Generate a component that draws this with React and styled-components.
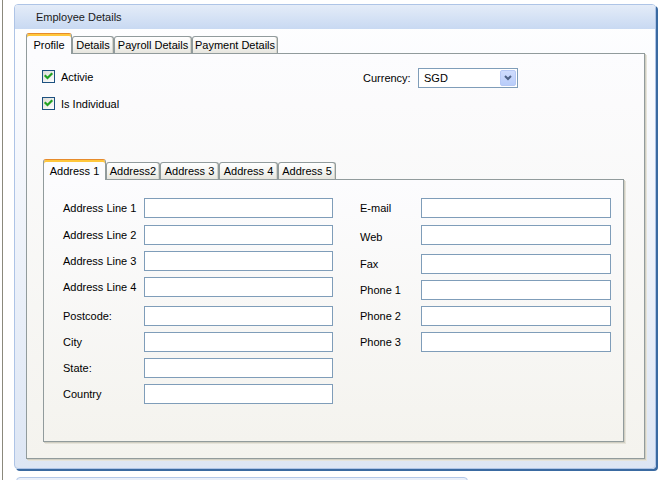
import React from "react";
import styled, { createGlobalStyle } from "styled-components";

const GlobalStyle = createGlobalStyle`
  html, body {
    margin: 0;
    padding: 0;
    background: #ffffff;
  }
  body {
    font-family: "Liberation Sans", Arial, sans-serif;
    font-size: 11px;
    color: #000;
  }
`;

const Page = styled.div`
  display: flex;
  height: 480px;
  overflow: hidden;
`;

const LeftRule = styled.div`
  width: 1px;
  margin-left: 2px;
  background: #8b897c;
`;

const Main = styled.div`
  display: flex;
  flex-direction: column;
  padding: 4px 0 0 11px;
`;

const Frame = styled.section`
  box-sizing: border-box;
  flex-shrink: 0;
  width: 642px;
  height: 465px;
  display: flex;
  flex-direction: column;
  border: 1px solid #aec4e6;
  border-radius: 4px;
  box-shadow: 2px 2px 0 #3a6aa1;
  background: linear-gradient(#ffffff 0%, #f7f9fd 25%, #dde6f4 100%);
`;

const TitleBar = styled.div`
  height: 24px;
  display: flex;
  align-items: center;
  padding-left: 21px;
  border-radius: 3px 3px 0 0;
  background: linear-gradient(#e4ecf8, #c8d9f2);
  color: #1a1a1a;
`;

const FrameBody = styled.div`
  flex: 1;
  display: flex;
  flex-direction: column;
  padding: 4px 10px 9px 11px;
`;

const TabBlock = styled.div`
  flex: 1;
  display: flex;
  flex-direction: column;
  margin-top: ${(p) => p.$mt || 0}px;
  margin-left: ${(p) => p.$ml || 0}px;
`;

const TabStrip = styled.div`
  display: flex;
  align-items: flex-end;
  height: 20px;
`;

const Tab = styled.div`
  box-sizing: border-box;
  position: relative;
  z-index: ${(p) => (p.$active ? 2 : 1)};
  width: ${(p) => p.$w}px;
  height: ${(p) => (p.$active ? 21 : 17)}px;
  margin-bottom: ${(p) => (p.$active ? -1 : 0)}px;
  display: flex;
  align-items: center;
  justify-content: center;
  padding-top: ${(p) => (p.$active ? 1 : 0)}px;
  border: 1px solid #919b9c;
  border-bottom: none;
  border-top-color: ${(p) => (p.$active ? "#e68b2c" : "#919b9c")};
  border-radius: 3px 3px 0 0;
  white-space: nowrap;
  background: ${(p) =>
    p.$active
      ? "#fcfcfe"
      : "linear-gradient(#ffffff, #f3f3ef 60%, #e6e5de)"};
  box-shadow: ${(p) =>
    p.$active ? "inset 0 2px 0 #ffc73c" : "inset -1px 0 0 #d6d4ca"};
`;

const TabPanel = styled.div`
  flex: 1;
  display: flex;
  flex-direction: column;
  border: 1px solid #919b9c;
  background: linear-gradient(#fcfcfe, #f4f3ee);
  box-shadow: 1px 1px 0 #d0cec2, 2px 2px 0 #e6e4da;
  padding: ${(p) => p.$pad};
`;

const TopRow = styled.div`
  display: grid;
  grid-template-columns: 321px auto;
  align-items: start;
`;

const CheckList = styled.div`
  display: flex;
  flex-direction: column;
  gap: 14px;
  margin-top: 2px;
`;

const CheckRow = styled.label`
  display: flex;
  align-items: center;
  gap: 6px;
  height: 13px;
`;

const CheckBox = styled.span`
  box-sizing: border-box;
  width: 13px;
  height: 13px;
  display: flex;
  border: 1px solid #1c5180;
  background: linear-gradient(135deg, #dcdcd7, #ffffff);
`;

const CurrencyGroup = styled.div`
  display: flex;
  align-items: center;
`;

const Label = styled.span`
  width: ${(p) => p.$w}px;
  flex-shrink: 0;
  white-space: nowrap;
  padding-top: ${(p) => p.$dy || 0}px;
`;

const SelectBox = styled.div`
  box-sizing: border-box;
  width: 100px;
  height: 20px;
  display: flex;
  align-items: center;
  border: 1px solid #7f9db9;
  background: #fff;
  padding: 0 0 0 5px;
`;

const SelectText = styled.span`
  flex: 1;
`;

const DropButton = styled.span`
  box-sizing: border-box;
  width: 16px;
  height: 16px;
  margin-right: 1px;
  display: flex;
  align-items: center;
  justify-content: center;
  border: 1px solid #b7c9f5;
  border-radius: 2px;
  background: linear-gradient(#cfdcfd, #b9cdfa);
`;

const FieldGrid = styled.div`
  display: flex;
  gap: 27px;
`;

const FieldColumn = styled.div`
  display: flex;
  flex-direction: column;
`;

const FieldRow = styled.div`
  display: flex;
  align-items: center;
  margin-top: ${(p) => p.$mt || 0}px;
`;

const TextBox = styled.input`
  box-sizing: border-box;
  width: ${(p) => p.$w}px;
  height: 20px;
  margin: 0;
  padding: 0 3px;
  border: 1px solid #7f9db9;
  background: #fff;
  font: inherit;
  outline: none;
`;

const BottomPeek = styled.div`
  flex-shrink: 0;
  width: 450px;
  height: 30px;
  margin: 8px 0 0 2px;
  border: 1px solid #b3c8e8;
  border-radius: 4px;
  background: linear-gradient(#eaf0fa, #cddcf2);
`;

const Check = () => (
  <svg width="11" height="11" viewBox="0 0 11 11">
    <path
      d="M2.5 5 L4.5 7 L8.5 3"
      fill="none"
      stroke="#21a121"
      strokeWidth="2.2"
      strokeLinecap="square"
    />
  </svg>
);

const Chevron = () => (
  <svg width="8" height="6" viewBox="0 0 8 6">
    <path d="M1 1 L4 4 L7 1" fill="none" stroke="#4d6185" strokeWidth="2" />
  </svg>
);

const profileTabs = [
  { name: "Profile", w: 46 },
  { name: "Details", w: 42 },
  { name: "Payroll Details", w: 78 },
  { name: "Payment Details", w: 86 },
];

const addressTabs = [
  { name: "Address 1", w: 63 },
  { name: "Address2", w: 54 },
  { name: "Address 3", w: 59 },
  { name: "Address 4", w: 59 },
  { name: "Address 5", w: 58 },
];

const leftFields = [
  { label: "Address Line 1", mt: 0 },
  { label: "Address Line 2", mt: 7 },
  { label: "Address Line 3", mt: 6 },
  { label: "Address Line 4", mt: 6 },
  { label: "Postcode:", mt: 9 },
  { label: "City", mt: 6 },
  { label: "State:", mt: 6 },
  { label: "Country", mt: 6 },
];

const rightFields = [
  { label: "E-mail", mt: 0 },
  { label: "Web", mt: 7, dy: 4 },
  { label: "Fax", mt: 9 },
  { label: "Phone 1", mt: 6 },
  { label: "Phone 2", mt: 6 },
  { label: "Phone 3", mt: 6 },
];

export default function App() {
  return (
    <>
      <GlobalStyle />
      <Page>
        <LeftRule />
        <Main>
          <Frame>
            <TitleBar>Employee Details</TitleBar>
            <FrameBody>
              <TabBlock>
                <TabStrip>
                  {profileTabs.map((t, i) => (
                    <Tab key={t.name} $w={t.w} $active={i === 0}>
                      {t.name}
                    </Tab>
                  ))}
                </TabStrip>
                <TabPanel $pad="14px 20px 16px 15px">
                  <TopRow>
                    <CheckList>
                      <CheckRow>
                        <CheckBox>
                          <Check />
                        </CheckBox>
                        Activie
                      </CheckRow>
                      <CheckRow>
                        <CheckBox>
                          <Check />
                        </CheckBox>
                        Is Individual
                      </CheckRow>
                    </CheckList>
                    <CurrencyGroup>
                      <Label $w={55}>Currency:</Label>
                      <SelectBox>
                        <SelectText>SGD</SelectText>
                        <DropButton>
                          <Chevron />
                        </DropButton>
                      </SelectBox>
                    </CurrencyGroup>
                  </TopRow>

                  <TabBlock $mt={49} $ml={1}>
                    <TabStrip>
                      {addressTabs.map((t, i) => (
                        <Tab key={t.name} $w={t.w} $active={i === 0}>
                          {t.name}
                        </Tab>
                      ))}
                    </TabStrip>
                    <TabPanel $pad="18px 0 0 19px">
                      <FieldGrid>
                        <FieldColumn>
                          {leftFields.map((f) => (
                            <FieldRow key={f.label} $mt={f.mt}>
                              <Label $w={81}>{f.label}</Label>
                              <TextBox $w={189} readOnly />
                            </FieldRow>
                          ))}
                        </FieldColumn>
                        <FieldColumn>
                          {rightFields.map((f) => (
                            <FieldRow key={f.label} $mt={f.mt}>
                              <Label $w={61} $dy={f.dy}>
                                {f.label}
                              </Label>
                              <TextBox $w={190} readOnly />
                            </FieldRow>
                          ))}
                        </FieldColumn>
                      </FieldGrid>
                    </TabPanel>
                  </TabBlock>
                </TabPanel>
              </TabBlock>
            </FrameBody>
          </Frame>
          <BottomPeek />
        </Main>
      </Page>
    </>
  );
}
